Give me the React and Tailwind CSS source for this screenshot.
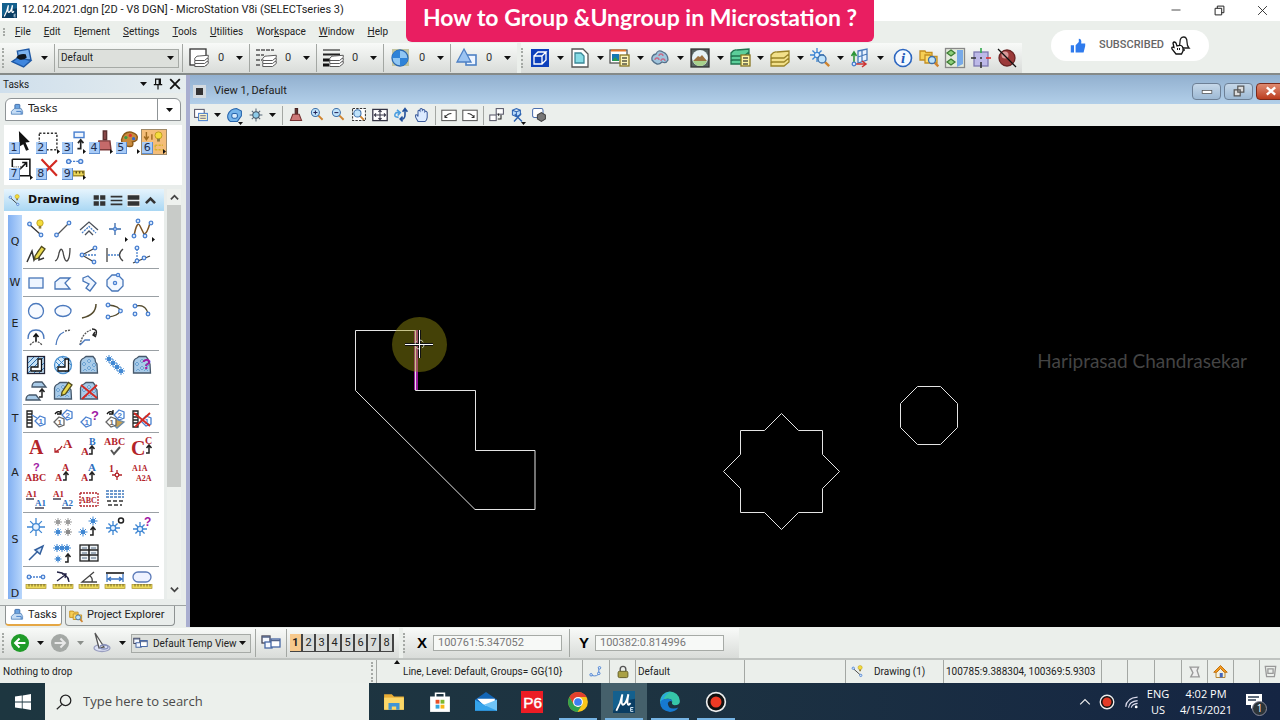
import React, { useState } from 'react';

const BLUE = '#4a80d0';
const RED = '#b3242a';

function Icon({ size = 20, children, className = '' }) {
  return (
    <svg width={size} height={size} viewBox="0 0 20 20" fill="none" strokeWidth="1.3" className={`shrink-0 overflow-visible ${className}`} aria-hidden="true">
      {children}
    </svg>
  );
}

function Caret({ dim = false, className = '' }) {
  return (
    <svg width="7" height="4" viewBox="0 0 7 4" className={`shrink-0 ${className}`} aria-hidden="true">
      <path d="M0 0H7L3.5 4Z" fill={dim ? '#8b8f8b' : '#111'} />
    </svg>
  );
}

// small node handle used by most of the drawing tools
const Dot = ({ x, y, r = 1.8 }) => <circle cx={x} cy={y} r={r} fill="#dcebff" stroke={BLUE} />;

const Burst = ({ x, y, r = 8, c = '#3f87d3' }) => (
  <g stroke={c} strokeWidth={r > 6 ? 1.3 : 1}>
    <path d={`M${x - r} ${y}H${x + r}M${x} ${y - r}V${y + r}M${x - r * 0.65} ${y - r * 0.65}L${x + r * 0.65} ${y + r * 0.65}M${x + r * 0.65} ${y - r * 0.65}L${x - r * 0.65} ${y + r * 0.65}`} />
    <circle cx={x} cy={y} r={r * 0.38} fill={r > 6 ? '#e6f2ff' : c} />
  </g>
);

const Txt = ({ x, y, s = 9, c = RED, sans, children }) => (
  <text x={x} y={y} fontSize={s} fill={c} stroke="none" fontWeight="700" fontFamily={sans ? '"Liberation Sans", sans-serif' : '"Liberation Serif", serif'}>{children}</text>
);

const UpArrow = ({ x, y }) => <path d={`M${x - 3} ${y + 9}H${x}V${y + 2}M${x - 2.5} ${y + 4}L${x} ${y + 1}L${x + 2.5} ${y + 4}`} stroke="#222" strokeWidth="1.5" />;

const Ruler = () => (
  <>
    <rect x="0" y="13.5" width="20" height="4" fill="#ecd95a" stroke="#a8922c" strokeWidth=".7" />
    <path d="M3 13v2.5M6 13v2.5M9 13v2.5M12 13v2.5M15 13v2.5M18 13v2.5" stroke="#5c4f17" strokeWidth=".8" />
  </>
);

const Bulb = ({ x, y }) => (
  <>
    <circle cx={x} cy={y} r="3.2" fill="#f4dc3c" stroke="#b99a1a" strokeWidth=".8" />
    <rect x={x - 1.3} y={y + 3} width="2.6" height="2.6" fill="#8c7a3c" />
  </>
);

const Pencil = () => <path d="M9 11L15.5 1.5L19 4L12.5 13L8.5 14.5Z" fill="#e9d84c" stroke="#4f4a1e" />;
const Cross = () => <path d="M2 4L18 17M18 4L3 18" stroke="#d32a22" strokeWidth="1.8" />;
const Cloud = () => (
  <>
    <path d="M1.5 18V7Q2 4 5 3L7 1.5H14L16 4Q16 7 18 9L18.5 18Z" fill="#a9cbe8" stroke="#46586b" />
    <path d="M3 9l2-2l2 2l-2 2ZM8 6l2-2l2 2l-2 2ZM8 13l2-2l2 2l-2 2ZM13 10l2-2l2 2l-2 2ZM4 16l2-2l2 2M12 16l2-2l2 2" stroke="#6ea4d4" strokeWidth="1" />
  </>
);
const Tag = ({ x, y, n, c = BLUE }) => (
  <>
    <path d={`M${x} ${y - 5}L${x + 5} ${y - 3}V${y + 3}L${x} ${y + 5}L${x - 5} ${y}Z`} fill="#fff" stroke={c} />
    <Txt x={x - 1.5} y={y + 3} s={8} c={c} sans>{n}</Txt>
  </>
);
const Film = () => <path d="M1 2H6V18H1ZM1 5H6M1 8H6M1 11H6M1 14H6" stroke="#222" fill="#fff" />;
const Sheets = ({ a, b, x = 0, y = 0, k = 1 }) => (
  <g transform={`translate(${x} ${y}) scale(${k})`} stroke={b} fill={a}>
    <path d="M1 15Q4 11 7 12L19 11V14L14 18L1 18Z" />
    <path d="M1 11Q4 7 7 8L19 7V10L14 14L1 14Z" />
    <path d="M1 7Q4 3 7 4L19 3V6L14 10L1 10Z" />
  </g>
);
const Lens = ({ x, y, r = 4 }) => (
  <>
    <path d={`M${x + r * 0.7} ${y + r * 0.7}L${x + r * 1.8} ${y + r * 1.8}`} stroke="#cf8430" strokeWidth="2.4" />
    <circle cx={x} cy={y} r={r} fill="#bfe3fb" stroke="#3d6fa8" />
  </>
);
const SmartLine = () => (
  <>
    <path d="M4 6L14 15" stroke="#333" />
    <Dot x={3.5} y={5} /><Dot x={15} y={16} /><Bulb x={14} y={4} />
  </>
);
const TaskBook = () => (
  <>
    <rect x="7" y="2" width="7" height="9" rx="1" fill="#6ba3e0" stroke="#3a69a6" />
    <path d="M2 12L6 8H16L18 12V16H2Z" fill="#c4dcf5" stroke="#5a88bd" />
    <path d="M9 12h7v4" stroke="#3d79c4" />
  </>
);
const Folders = () => (
  <>
    <path d="M1 3H6L7 4.5H13V12H1Z" fill="#f6cf55" stroke="#c48f21" />
    <path d="M6 7H11L12 8.5H18V15H6Z" fill="#fbdc72" stroke="#c48f21" />
    <Lens x={13} y={12} r={3.5} />
  </>
);
const Windows3 = () => (
  <>
    <rect x="1" y="3" width="8" height="7" fill="#f4f8ff" stroke="#445" />
    <rect x="4" y="9" width="7" height="6" fill="#f4f8ff" stroke="#4667a5" />
    <rect x="10" y="6" width="9" height="8" fill="#fff" stroke="#4667a5" />
    <path d="M1 4H9M10 7.5H19" stroke="#53658c" />
  </>
);
const Logo = () => (
  <>
    <rect width="20" height="20" fill="#0a3d63" />
    <path d="M0 0H20V7Q8 8 0 18Z" fill="#14608e" />
    <path d="M3 18Q7 11 8.5 3Q7 12 9 12.5Q12 12 14 3Q12 13 14.5 12.500L16 11" stroke="#fff" strokeWidth="1.700" />
    <path d="M18.500 15H16V18.500H18.500M16 16.700H18" stroke="#cfe4f2" strokeWidth=".9" />
  </>
);

const tools = {
  smartline: <SmartLine />,
  line: <><path d="M4 16L16 4" stroke="#555" /><Dot x={3.5} y={16} /><Dot x={16} y={4} /></>,
  multiline: <><path d="M1 11L10 3L19 11M6 16L10 12L14 16" stroke="#4a4f58" /><path d="M3 14L10 7.500L17 14" stroke="#4b82cb" strokeDasharray="2 1" /></>,
  point: <><path d="M4 10H16M10 4V16" stroke="#3768a8" /><Dot x={10} y={10} r={1.5} /></>,
  curve: <><path d="M2 17Q5 1 8 7T12 15Q15 15 18 4" stroke="#7c5425" strokeWidth="1.500" /><Dot x={2} y={17} /><Dot x={6} y={2} /><Dot x={13} y={17} /><Dot x={19} y={4} /></>,
  sketch: <><path d="M1 17L6 6L8 15L13 5V15L18 13" stroke="#333" strokeWidth="1.5" /><Pencil /></>,
  stream: <path d="M2 16Q5 15 6 8Q8 1 10 7Q12 19 15 15Q17 12 17 3" stroke="#444" />,
  bisect: <><path d="M3 10L16 3M3 10L15 17" stroke="#444" /><path d="M6 10H18" stroke="#4b82cb" strokeDasharray="2 1" /><Dot x={3} y={10} /><Dot x={16} y={3} /><Dot x={15} y={17} /></>,
  minDist: <><path d="M2 3V17M18 4Q11 10 18 16" stroke="#444" /><path d="M3 10H14" stroke="#4b82cb" strokeDasharray="2 1" /></>,
  angle: <><path d="M1 18L18 11" stroke="#444" /><path d="M5 4V14" stroke="#4b82cb" strokeDasharray="2 1" /><Dot x={5} y={3} /><Dot x={5} y={16} /><Dot x={12} y={13} /></>,

  block: <rect x="3" y="5" width="14" height="10" fill="#eef5ff" stroke="#4876b8" />,
  shape: <path d="M2 16V9L7 5H17L12 10L17 16Z" fill="#eef5ff" stroke="#4876b8" />,
  ortho: <path d="M4 5L9 3L17 10L11 18L7 15L10 11L4 8Z" fill="#eef5ff" stroke="#4876b8" />,
  polygon: <><path d="M7 2H13L18 7V13L13 18H7L2 13V7Z" fill="#f3f8ff" stroke="#4876b8" /><Dot x={10} y={10} r={1.6} /><Dot x={13} y={2} r={1.6} /></>,

  circle: <circle cx="10" cy="10" r="7.5" fill="#f7faff" stroke="#4b79bd" />,
  ellipse: <ellipse cx="10" cy="10" rx="8" ry="5.5" fill="#f7faff" stroke="#4b79bd" />,
  arc: <path d="M17 3Q17 14 3 17" stroke="#544b2e" strokeWidth="1.5" />,
  halfEllipse: <><path d="M3 4Q15 5 15 10Q13 15 3 16" stroke="#544b2e" /><Dot x={3} y={4} /><Dot x={15.5} y={10} /><Dot x={3} y={16} /></>,
  quarter: <><path d="M4 5Q14 3 16 13" stroke="#544b2e" /><Dot x={3} y={5} /><Dot x={16} y={13} /><Dot x={3} y={13} /></>,
  arcRadius: <><path d="M2 12Q2 3 10 3Q18 3 18 12" stroke="#4b79bd" /><path d="M4 18Q10 11 16 18" stroke="#555" strokeDasharray="2 1" /><path d="M10 14V7M7.500 10L10 7L12.500 10" stroke="#111" strokeWidth="1.600" /></>,
  arcAngle: <><path d="M3 18Q4 8 11 5" stroke="#4b79bd" /><path d="M12 4L18 3" stroke="#555" strokeDasharray="2 1" /></>,
  arcAxis: <><path d="M1 18Q3 6 12 3" stroke="#555" strokeDasharray="2 1" /><path d="M1 18L6 13H11" stroke="#4b79bd" /><path d="M13 2Q19 2 17 8H14M16 5L14 8L17 10" stroke="#222" strokeWidth="1.4" /></>,

  hatch: <><rect x="1.5" y="1.5" width="17" height="17" fill="#c4e0f5" stroke="#223" /><path d="M2 8L8 2M2 13L13 2M2 18L18 2M8 18L18 8M13 18L18 13" stroke="#2a6aa8" strokeWidth="1" /><path d="M12 4H15.500V16H5V12H12Z" fill="#fff" stroke="#111" /></>,
  crosshatch: <><circle cx="10" cy="10" r="8.5" fill="#d7eafa" stroke="#4a90cf" /><path d="M3 7L13 17M5 4L16 15M9 2L18 10M3 13L13 3M6 16L17 5" stroke="#3a87cc" strokeWidth="1" /><path d="M12 4H15.500V16H5V12H12Z" fill="#fff" stroke="#111" /></>,
  pattern: <Cloud />,
  linear: <><Burst x={4} y={4} r={4} /><Burst x={8} y={8} r={4} /><Burst x={12} y={12} r={4} /><Burst x={16} y={16} r={4} /></>,
  showPattern: <><Cloud /><Txt x={10} y={14} s={15} c="#a11aa5" sans>?</Txt></>,
  matchPattern: <><path d="M6 6Q6 2 9 1H16L20 6ZM0 19Q0 15 3 14H10L14 19Z" fill="#a9cbe8" stroke="#46586b" /><UpArrow x={16} y={7} /></>,
  changePattern: <><Cloud /><Pencil /></>,
  deletePattern: <><Cloud /><Cross /></>,

  attachTags: <><Film /><path d="M6 6L11 9" stroke={BLUE} /><Tag x={14} y={12} n="1" /></>,
  editTags: <><path d="M2 5Q5 1 8 4M8 1V5H4" stroke="#111" /><Tag x={6} y={13} n="1" c="#666" /><Tag x={14} y={6} n="2" /></>,
  reviewTags: <><Tag x={7} y={13} n="1" /><Txt x={12} y={11} s={13} c="#a11aa5" sans>?</Txt></>,
  changeTags: <><path d="M10 10L19 13L12 19L8 15Z" fill="#c8a050" stroke="#6789aa" /><path d="M2 5Q5 1 8 4M8 1V5H4" stroke="#111" /><Tag x={6} y={13} n="1" c="#666" /><Tag x={14} y={6} n="2" /></>,
  deleteTags: <><Film /><Tag x={14} y={12} n="1" /><Cross /></>,

  text: <Txt x={3} y={17} s={20}>A</Txt>,
  note: <><Txt x={10} y={11} s={13}>A</Txt><path d="M9 9L7 12L2 15M2 11V15H6" stroke={RED} /></>,
  editText: <><Txt x={2} y={18} s={11}>A</Txt><Txt x={10} y={8} s={10} c="#2d6fc0">B</Txt><UpArrow x={13} y={8} /></>,
  spell: <><Txt x={-1} y={8} s={10}>ABC</Txt><path d="M6 13L9 17L15 10" stroke="#555" strokeWidth="2" /></>,
  changeText: <><Txt x={-1} y={18} s={20}>C</Txt><Txt x={13} y={7} s={10}>C</Txt><UpArrow x={17} y={7} /></>,
  showText: <><Txt x={7} y={8} s={11} c="#a11aa5" sans>?</Txt><Txt x={-1} y={18} s={10}>ABC</Txt></>,
  matchText: <><Txt x={2} y={18} s={10}>A</Txt><Txt x={9} y={8} s={10}>A</Txt><UpArrow x={13} y={8} /></>,
  changeAttr: <><Txt x={2} y={18} s={10}>A</Txt><Txt x={9} y={8} s={11} c="#2d6fc0">A</Txt><UpArrow x={13} y={8} /></>,
  textNode: <><Txt x={4} y={9} s={10}>1</Txt><path d="M12 7V17M7 12H17" stroke={RED} /><circle cx="12" cy="12" r="1.8" fill="#fff" stroke={RED} /></>,
  copyText: <><Txt x={0} y={8} s={8}>A1A</Txt><Txt x={4} y={18} s={8}>A2A</Txt></>,
  copyInc: <><Txt x={0} y={8} s={9}>A1</Txt><path d="M0 10H8M9 19H18" stroke="#445" /><Txt x={9} y={17} s={9} c="#2d6fc0">A1</Txt></>,
  copyEnter: <><Txt x={0} y={8} s={9}>A1</Txt><path d="M0 10H8M9 19H18" stroke="#445" /><Txt x={9} y={17} s={9} c="#2d6fc0">A2</Txt></>,
  fillField: <><path d="M1 4H19M1 17H19M1 4V17M19 4V17" stroke={RED} strokeDasharray="2 1" /><Txt x={1} y={14} s={8}>ABC</Txt></>,
  fields: <><path d="M1 2H19M1 5H19M1 8H19" stroke="#3f78bd" strokeDasharray="3 1" /><path d="M2 12H19M3 16H17" stroke="#333" strokeDasharray="4 2" /></>,

  placeCell: <Burst x={10} y={10} r={9} />,
  matrix: <><Burst x={5} y={5} r={4} c="#999" /><Burst x={15} y={5} r={4} c="#999" /><Burst x={5} y={15} r={4} /><Burst x={15} y={15} r={4} c="#888" /></>,
  selectCell: <><Burst x={14} y={4} r={4.5} /><Burst x={4} y={15} r={4.5} /><UpArrow x={14} y={9} /></>,
  defineOrigin: <><Burst x={8} y={11} r={7} /><circle cx="16" cy="3.500" r="2.500" stroke="#222" strokeWidth="1.500" /></>,
  identify: <><Burst x={8} y={12} r={7} /><Txt x={12} y={9} s={12} c="#a11aa5" sans>?</Txt></>,
  terminator: <path d="M3 17L12 8M9 7L17 3L14 11Z" stroke="#335f9d" strokeWidth="1.5" fill="#d3e8ff" />,
  replaceCell: <><Burst x={4} y={5} r={4} /><Burst x={9} y={5} r={4} /><Burst x={14} y={5} r={4} /><Burst x={5} y={16} r={3.5} /><UpArrow x={15} y={10} /></>,
  cellTable: <><rect x="1" y="2" width="18" height="16" fill="#eef2f5" stroke="#222" /><path d="M1 7H19M1 12H19M10 2V18" stroke="#222" strokeWidth="1.6" /><path d="M3 5h5M12 5h5M3 10h5M12 10h5M3 15h5M12 15h5" stroke="#89a" /></>,

  dimElement: <><path d="M4 6H15" stroke={BLUE} strokeDasharray="2 1" /><Dot x={3} y={6} /><Dot x={17} y={6} /><Ruler /></>,
  dimRadius: <><path d="M4 1Q15 2 16 11M4 10L12 4M9 3L13 3L12 7" stroke="#224" /><Ruler /></>,
  dimAngle: <><path d="M15 1L3 11H18M11 5Q14 7 13 11" stroke="#444" /><Ruler /></>,
  dimLinear: <><path d="M1 2H19" stroke="#333" strokeWidth="1.8" /><path d="M2 3V11M18 3V11M3 8H17M6 6L3 8L6 10M14 6L17 8L14 10" stroke="#3b73c0" /><Ruler /></>,
  dimSize: <><rect x="1" y="1" width="18" height="10" rx="5" fill="#eef2ff" stroke="#5a79b8" /><Ruler /></>,
};

const palette = [
  { key: 'Q', rows: ['smartline line multiline point curve', 'sketch stream bisect minDist angle'] },
  { key: 'W', rows: ['block shape ortho polygon'] },
  { key: 'E', rows: ['circle ellipse arc halfEllipse quarter', 'arcRadius arcAngle arcAxis'] },
  { key: 'R', rows: ['hatch crosshatch pattern linear showPattern', 'matchPattern changePattern deletePattern'] },
  { key: 'T', rows: ['attachTags editTags reviewTags changeTags deleteTags'] },
  { key: 'A', rows: ['text note editText spell changeText', 'showText matchText changeAttr textNode copyText', 'copyInc copyEnter fillField fields'] },
  { key: 'S', rows: ['placeCell matrix selectCell defineOrigin identify', 'terminator replaceCell cellTable'] },
  { key: 'D', rows: ['dimElement dimRadius dimAngle dimLinear dimSize', ''] },
];

const mainTasks = [
  { name: 'Element Selection', art: <path d="M9 0L19 10L15 10.5L18 17L15.5 18L13 12L9.5 14Z" fill="#111" /> },
  { name: 'Fence', more: true, art: <path d="M3 2H19V17H3Z" stroke="#333" strokeDasharray="2 1.5" /> },
  { name: 'Manipulate', more: true, art: <><rect x="11" y="1" width="9" height="5" fill="#eef5ff" stroke={BLUE} /><UpArrow x={17} y={7} /></> },
  { name: 'View Control', more: true, art: <><path d="M13 0H16V8H13Z" fill="#8a4a4a" stroke="#5b3030" /><path d="M9 9H19L20 17H8Z" fill="#c56a6a" stroke="#7c3a3a" /></> },
  { name: 'Change Attributes', more: true, art: <><path d="M5 8Q7 0 14 1Q21 3 19 8Q17 10 15 10Q17 15 11 14Q5 13 5 8Z" fill="#c98a3c" stroke="#8a5716" /><circle cx="9" cy="6" r="1.5" fill="#3b9b45" /><circle cx="13" cy="4" r="1.5" fill="#d33" /><circle cx="16" cy="7" r="1.5" fill="#36c" /></> },
  { name: 'Groups', more: true, active: true, art: <><path d="M4 1V7M2 5L4 8L6 5M9 3V8" stroke="#a06a20" /><Bulb x={15} y={4} /><path d="M12 13h7M12 17h7M12 13v4" stroke="#d8b32c" strokeDasharray="2 1" /></> },
  { name: 'Modify', more: true, art: <><path d="M3 2H19V17H10M3 2V9" stroke="#111" strokeWidth="1.4" /><path d="M10 11L16 5M12 5H16V9" stroke="#111" strokeWidth="1.4" /><path d="M4 9H11V12" stroke="#666" strokeDasharray="1 1" /></> },
  { name: 'Delete', art: <path d="M5 2L19 17M19 3L9 13" stroke="#d32a22" strokeWidth="2" /> },
  { name: 'Measure', more: true, art: <><path d="M7 4H15" stroke={BLUE} strokeDasharray="2 1" /><Dot x={6} y={4} /><Dot x={17} y={4} /><path d="M10 13h10v4H10z" fill="#ecd95a" stroke="#a8922c" /><path d="M13 13v2M16 13v2M19 13v2" stroke="#5c4f17" /></> },
];

const attributes = [
  { name: 'Color', art: <><rect x="1" y="1" width="16" height="16" fill="#fff" stroke="#333" /><Sheets a="#fff" b="#555" x={5} y={5} k={0.75} /></> },
  { name: 'Line style', art: <><path d="M0 2H18M0 7H8M0 12H6M0 17H5" stroke="#555" strokeDasharray="4 1" strokeWidth="1.5" /><Sheets a="#fff" b="#555" x={6} y={5} k={0.75} /></> },
  { name: 'Line weight', art: <><path d="M0 2H17" stroke="#444" /><path d="M0 6.5H17" stroke="#222" strokeWidth="2" /><path d="M0 12H7M0 17H6" stroke="#111" strokeWidth="3" /><Sheets a="#fff" b="#555" x={6} y={5} k={0.75} /></> },
  { name: 'Transparency', art: <><rect x="2" y="1" width="17" height="17" fill="#c3c5a0" /><circle cx="10" cy="10" r="8" fill="#8fc6f3" stroke="#2c68ae" /><path d="M10 2V10H2A8 8 0 0 1 10 2M10 10H18A8 8 0 0 1 10 18Z" fill="#2f83d8" /></> },
  { name: 'Priority', art: <><rect x="9" y="7" width="10" height="10" fill="#eef5ff" stroke="#4d80c4" strokeWidth="1.6" /><path d="M7 1L14 14H0Z" fill="#9cc4f2" stroke="#4d80c4" /></> },
];

const dropTools = [
  { name: 'Models', art: <><rect x="1" y="1" width="18" height="18" fill="#0d40bb" /><path d="M4 8H12V16H4ZM4 8L8 4H16L12 8M16 4V12L12 16" stroke="#fff" /></> },
  { name: 'References', art: <><path d="M2 1H13L18 6V19H2Z" fill="#fff" stroke="#555" /><path d="M5 5H11L14 8V15H5Z" fill="#86dce6" stroke="#3b8796" /></> },
  { name: 'Raster Manager', art: <><rect x="0" y="2" width="17" height="13" fill="#fff" stroke="#555" /><path d="M1 2.5H16" stroke="#e2762c" strokeWidth="2" /><rect x="2" y="6" width="7" height="7" fill="#1878b4" /><path d="M2 13L5 9L9 13" fill="#2b9b4e" /><rect x="10" y="7" width="9" height="11" fill="#fdf4b8" stroke="#887523" /><path d="M12 10h5M12 13h5M12 16h5" stroke="#554" /></> },
  { name: 'Point Clouds', art: <><path d="M2 12Q1 7 6 6Q8 1 13 4Q18 6 18 12Q16 16 12 14Q7 19 2 12Z" fill="#9fc4dc" stroke="#55718b" /><path d="M5 12a2 2 0 0 1 4 0M9 8a2 2 0 0 1 4 0M11 13a2 2 0 0 1 4 0" stroke="#c76a86" /></> },
  { name: 'Saved Views', art: <><rect x="1" y="1" width="18" height="18" fill="#566461" stroke="#333" /><circle cx="10" cy="10" r="8" fill="#e6f3f5" /><path d="M3 13L8 8L10 9L12 7L17 13Z" fill="#9b7340" /><path d="M3 13H17Q15 18 10 18T3 13" fill="#a8d18c" /></> },
  { name: 'Level Manager', art: <><Sheets a="#5ccf9a" b="#207450" y={-2} /><rect x="11" y="7" width="9" height="11" fill="#fdf4a0" stroke="#887523" /><path d="M13 10h5M13 13h5M13 16h5" stroke="#554" /></> },
  { name: 'Level Display', art: <Sheets a="#f2e08a" b="#9a8428" /> },
  { name: 'Element Information', art: <><Burst x={7} y={7} r={7} /><Lens x={12} y={11} /></> },
  { name: 'Auxiliary Coordinates', art: <><path d="M8 3L17 1V12L8 15ZM8 9L17 6M12 2V14" fill="#e8f2ff" stroke="#4779ba" /><path d="M4 16V5M1.5 8L4 4L6.5 8" stroke="#2d9638" strokeWidth="1.6" /><path d="M4 16H15M12 13L16 16L12 19" stroke="#c33" strokeWidth="1.5" /><Dot x={4} y={16} /></> },
];

const plainTools = [
  { name: 'Information', art: <><circle cx="10" cy="10" r="8.5" fill="#f4f9ff" stroke="#2c66c0" strokeWidth="1.6" /><text x="8" y="15" fontSize="15" fontStyle="italic" fontWeight="700" fill="#2058b8" fontFamily='"Liberation Serif", serif'>i</text></> },
  { name: 'Find', art: <Folders /> },
  { name: 'Toggle AccuDraw', art: <><rect x="0.5" y="0.5" width="19" height="19" fill="#e4ebdd" stroke="#888" /><path d="M12 2H18V16L12 19Z" fill="#78aae8" /><path d="M6 2L10 5L6 8L2 5ZM6 11L10 14L6 17L2 14Z" fill="#8ed07a" stroke="#3d7b34" /></> },
  { name: 'AccuDraw', art: <><rect x="3" y="4" width="14" height="14" fill="#bdb9e8" stroke="#7d78b0" /><path d="M10 0V5" stroke="#2fa84b" strokeWidth="1.6" /><path d="M15 10H20" stroke="#d33" strokeWidth="1.6" /><path d="M0 10H5M10 14V20M9 10h2" stroke="#333" strokeWidth="1.6" /></> },
  { name: 'Popset', art: <><circle cx="10" cy="10" r="8" fill="#9c3a3a" stroke="#6a2424" /><circle cx="8" cy="7" r="3.500" fill="#d89a9a" /><path d="M1 1L19 19" stroke="#111" /></> },
];

const viewTools = [
  { name: 'View Attributes', drop: true, art: <><rect x="2" y="3" width="12" height="10" fill="#fff" stroke="#556" /><rect x="7" y="8" width="11" height="9" fill="#fdf7c8" stroke="#4a80d0" /><path d="M9 11h7M9 14h7" stroke="#668" /></> },
  { name: 'Display Style', more: true, art: <><path d="M1 10Q4 2 12 2L18 5V11L13 18H4Q0 15 1 10Z" fill="#74b4ea" stroke="#2765ac" /><rect x="6" y="8" width="7" height="6" rx="2" fill="#d6ebfb" stroke="#2765ac" /></> },
  { name: 'Adjust Brightness', drop: true, art: <><Burst x={10} y={10} r={8} c="#567" /><circle cx="10" cy="10" r="4" fill="#8ecbe8" stroke="#456" /></> },
  { name: 'Update View', sep: true, art: <><path d="M9 2H12V9H9Z" fill="#633" stroke="#422" /><path d="M6 9H14L17 17H3Z" fill="#c77" stroke="#733" /></> },
  { name: 'Zoom In', art: <><Lens x={8} y={7} r={5} /><path d="M5.5 7H10.5M8 4.5V9.5" stroke="#225" /></> },
  { name: 'Zoom Out', art: <><Lens x={8} y={7} r={5} /><path d="M5.5 7H10.5" stroke="#225" /></> },
  { name: 'Window Area', art: <><rect x="2" y="2" width="16" height="15" stroke="#333" strokeDasharray="3 1.5" fill="#fff" /><Lens x={8} y={8} r={4.5} /></> },
  { name: 'Fit View', art: <><rect x="1" y="3" width="18" height="14" fill="#fff" stroke="#334" strokeWidth="1.6" /><path d="M3 10H17M10 4V16M5 8L3 10L5 12M15 8L17 10L15 12M8 6L10 4L12 6M8 14L10 16L12 14" stroke="#334" /></> },
  { name: 'Rotate View', art: <><path d="M7 13Q-1 12 4 7H9M5 3.500L9 7L6 10.500" stroke="#4a9ee0" strokeWidth="2" /><path d="M15 3V10Q15 16 9 15M12 6L15 2L18 6M12 12L9 15L12 18" stroke="#23529c" strokeWidth="2" /></> },
  { name: 'Pan View', art: <path d="M5 18Q1 12 2 10Q4 9 5 12V5Q6 3 7.5 5V3Q9 1 10.5 3V4Q12 2 13.5 4V6Q15 4 16.5 7V13Q16 17 14 18Z" fill="#dcebff" stroke="#3c5c9c" /> },
  { name: 'View Previous', sep: true, art: <><rect x="1" y="4" width="18" height="13" fill="#fff" stroke="#555" /><path d="M5 10V13H8M5 13Q8 8 13 8" stroke="#333" /></> },
  { name: 'View Next', art: <><rect x="1" y="4" width="18" height="13" fill="#fff" stroke="#555" /><path d="M15 10V13H12M15 13Q12 8 7 8" stroke="#333" /></> },
  { name: 'Copy View', sep: true, art: <><rect x="9" y="2" width="9" height="7" fill="#fff" stroke="#556" /><rect x="1" y="10" width="8" height="7" fill="#fff" stroke="#556" /><path d="M11 15H15V10M12 8v3" stroke="#222" /></> },
  { name: 'View Perspective', more: true, art: <><path d="M3 4L8 2L13 4V10L8 12L3 10ZM3 4L8 6L13 4M8 6V12" fill="#b8d9fa" stroke="#2e64b2" /><path d="M5 18L14 8M6 9L15 18" stroke="#2e64b2" strokeWidth="1.8" /></> },
  { name: 'Clip Volume', art: <><rect x="2" y="2" width="13" height="11" rx="2" fill="#fff" stroke="#4c6fae" /><path d="M8 10L13 7L18 10V15L13 18L8 15Z" fill="#777" stroke="#444" /></> },
];

const menus = [['', 'F', 'ile'], ['', 'E', 'dit'], ['E', 'l', 'ement'], ['', 'S', 'ettings'], ['', 'T', 'ools'], ['', 'U', 'tilities'], ['Wor', 'k', 'space'], ['', 'W', 'indow'], ['', 'H', 'elp']];

const Grip = () => <span className="h-5 w-0 shrink-0 border-l-2 border-dotted border-[#a5a9a5]" />;
const Sep = () => <span className="h-7 w-px shrink-0 bg-[#a3a7a3]" />;

function TitleBar() {
  return (
    <header className="flex h-[21px] items-center justify-between bg-white pl-[2px]">
      <div className="flex items-center gap-[5px]">
        <Icon size={15}><Logo /></Icon>
        <h1 className="text-[11px] text-[#1c1c1c]">12.04.2021.dgn [2D - V8 DGN] - MicroStation V8i (SELECTseries 3)</h1>
      </div>
      <div className="flex gap-[7px]">
        <button type="button" aria-label="Minimize" className="flex w-9 justify-center"><Icon size={10}><path d="M1 10H19" stroke="#222" strokeWidth="1.6" /></Icon></button>
        <button type="button" aria-label="Restore" className="flex w-9 justify-center"><Icon size={11}><path d="M2 6H14V18H2ZM6 6V2H18V14H14" stroke="#222" strokeWidth="1.8" /></Icon></button>
        <button type="button" aria-label="Close" className="flex w-9 justify-center"><Icon size={11}><path d="M2 2L18 18M18 2L2 18" stroke="#222" strokeWidth="1.6" /></Icon></button>
      </div>
    </header>
  );
}

function MenuBar() {
  return (
    <nav className="flex h-[22px] items-center pl-[3px]">
      <span className="h-2 w-0 border-l-2 border-dotted border-[#a5a9a5]" />
      <div className="flex gap-[13px] pl-[10px]">
        {menus.map(([a, u, b]) => (
          <button key={a + u + b} type="button" className="leading-4 text-[#222]">{a}<span className="underline">{u}</span>{b}</button>
        ))}
      </div>
    </nav>
  );
}

function MainToolbar() {
  return (
    <div className="flex h-[32px] items-stretch gap-1 border-b-2 border-[#858a88]">
      <div className="flex items-center bg-linear-to-b from-[#f8faf8] to-[#d9dcd9] pl-[2px]">
        <Grip />
        <button type="button" aria-label="Active model" className="flex w-[50px] items-center justify-between pr-[6px] pl-[7px]">
          <Icon size={21}><path d="M6 3L17 1L19 11L8 14Z" fill="#7db4ee" stroke="#1e58a5" /><path d="M1 13L7 9L19 12L12 18Z" fill="#3f86de" stroke="#1e58a5" /><path d="M5 9Q8 5 14 6L15 9Q12 12 8 11Z" fill="#101820" /></Icon>
          <Caret />
        </button>
        <Sep />
        <span className="relative mx-[3px] flex items-center">
          <select aria-label="Active level" className="h-[19px] w-[121px] appearance-none border border-[#a6aaa6] bg-[#dde0dc] pl-[2px] leading-4 text-[#222]"><option>Default</option></select>
          <Caret className="pointer-events-none absolute right-[5px]" />
        </span>
        {attributes.map(a => (
          <label key={a.name} className="relative flex h-7 w-[67px] items-center border-l border-[#a3a7a3] pl-[6px]">
            <Icon>{a.art}</Icon>
            <select aria-label={a.name} className="ml-[8px] w-7 appearance-none bg-transparent pl-px text-[11px] text-[#333]"><option>0</option></select>
            <Caret className="pointer-events-none absolute right-[6px]" />
          </label>
        ))}
      </div>
      <div className="flex items-center bg-linear-to-b from-[#f8faf8] to-[#d9dcd9] pr-[5px]">
        <Grip />
        <div className="flex pl-[7px]">
          {dropTools.map(t => (
            <button key={t.name} type="button" aria-label={t.name} className="flex w-[40px] items-center gap-[7px]"><Icon>{t.art}</Icon><Caret /></button>
          ))}
        </div>
        <div className="flex gap-[6px] pl-[3px]">
          {plainTools.map(t => <button key={t.name} type="button" aria-label={t.name}><Icon>{t.art}</Icon></button>)}
        </div>
      </div>
    </div>
  );
}

function TasksPanel() {
  const [active, setActive] = useState('Groups');
  return (
    <aside className="flex w-[190px] shrink-0 flex-col overflow-hidden border-r-4 border-[#a9aed0] bg-[#e9edeb]">
      <div className="flex h-[18px] shrink-0 items-center bg-linear-to-r from-[#cfdfec] to-[#e6edef] pr-[5px] pl-[3px]">
        <h2 className="grow text-[#222]">Tasks</h2>
        <div className="flex items-center gap-[5px]">
          <button type="button" aria-label="Panel menu"><Caret /></button>
          <button type="button" aria-label="Pin"><Icon size={12}><path d="M6 2H14V11H6ZM3 11H17M10 11V19M12 2V11" stroke="#111" strokeWidth="2" /></Icon></button>
          <button type="button" aria-label="Close panel"><Icon size={12}><path d="M2 2L18 18M18 2L2 18" stroke="#111" strokeWidth="3" /></Icon></button>
        </div>
      </div>

      <div className="relative mx-[5px] mt-[5px] flex h-[23px] shrink-0 items-center rounded-t-md border border-[#8f9496] bg-white">
        <Icon size={14} className="absolute left-[4px]"><TaskBook /></Icon>
        <select aria-label="Task list" className="w-full appearance-none bg-transparent pl-[22px] font-['DejaVu_Sans',sans-serif] text-[11px] text-[#222]"><option>Tasks</option></select>
        <span className="pointer-events-none absolute right-0 flex h-full w-[23px] items-center justify-center border-l border-[#8f9496]"><Caret /></span>
      </div>

      <div className="mx-[4px] mt-[4px] grid h-[60px] shrink-0 grid-cols-6 content-center bg-white pr-[14px] pl-[4px]">
        {mainTasks.map((t, i) => (
          <button key={t.name} type="button" aria-label={t.name} onClick={() => setActive(t.name)}
            className={`relative h-[26px] w-[26px] border ${active === t.name ? 'border-[#a08a68] bg-[#f4bd79]' : 'border-transparent'}`}>
            <Icon size={22}>{t.art}</Icon>
            <span className="absolute bottom-0 left-0 h-[12px] w-[11px] border-r border-b border-[#5f8fd0] bg-[#a8cbf7] text-center font-['DejaVu_Sans',sans-serif] text-[11px] leading-[12px] text-[#1d2c4c]">{i + 1}</span>
            {t.more && <svg width="3" height="5" className="absolute right-0 bottom-0"><path d="M0 0L3 2.5L0 5Z" fill="#111" /></svg>}
          </button>
        ))}
      </div>

      <div className="mx-[4px] mt-[4px] flex h-[410px] min-h-0 gap-[3px]">
        <div className="flex w-[160px] flex-col overflow-hidden bg-white">
          <div className="flex h-[22px] shrink-0 items-center bg-linear-to-b from-[#e6f4fd] to-[#a9d7f3] pr-[7px] pl-[4px]">
            <Icon size={13}><SmartLine /></Icon>
            <h3 className="ml-[7px] grow font-['DejaVu_Sans',sans-serif] text-[11px] font-bold text-[#111]">Drawing</h3>
            <div className="flex items-center gap-[4px]">
              <button type="button" aria-label="Icon view"><Icon size={13}><path d="M1 2H9V9H1ZM11 2H19V9H11ZM1 11H9V18H1ZM11 11H19V18H11Z" fill="#333" /></Icon></button>
              <button type="button" aria-label="List view"><Icon size={13}><path d="M1 4H19M1 10H19M1 16H19" stroke="#333" strokeWidth="2.5" /></Icon></button>
              <button type="button" aria-label="Panel view" className="bg-[#e8eef2]"><Icon size={13}><path d="M1 2H19V9H1ZM1 11H19V18H1Z" fill="#333" /></Icon></button>
              <button type="button" aria-label="Collapse"><Icon size={13}><path d="M3 14L10 7L17 14" stroke="#333" strokeWidth="4" /></Icon></button>
            </div>
          </div>
          <div className="flex flex-col pt-[4px] pr-[5px] pl-[4px]">
            {palette.map(group => (
              <section key={group.key} className="flex">
                <h4 className="flex w-[14px] items-center justify-center bg-linear-to-r from-[#82b0f2] to-[#b8d6fb] font-['DejaVu_Sans',sans-serif] text-[11px] text-[#222]">{group.key}</h4>
                <div className="ml-px grow border-b border-[#9aa0a4] pt-px pr-[4px]">
                  {group.rows.map((row, r) => (
                    <div key={r} className="grid h-[26px] grid-cols-5 items-center justify-items-center">
                      {row.split(' ').filter(Boolean).map(name => (
                        <button key={name} type="button" aria-label={name} className="relative">
                          <Icon>{tools[name]}</Icon>
                          {(name === 'point' || name === 'curve') && <svg width="3" height="5" className="absolute -right-[3px] -bottom-[3px]"><path d="M0 0L3 2.5L0 5Z" fill="#111" /></svg>}
                        </button>
                      ))}
                    </div>
                  ))}
                </div>
              </section>
            ))}
          </div>
        </div>
        <div className="flex w-[14px] flex-col items-center bg-[#eef1ee]">
          <button type="button" aria-label="Scroll up" className="flex h-[16px] items-center"><Icon size={9}><path d="M2 14L10 6L18 14" stroke="#444" strokeWidth="4" /></Icon></button>
          <span className="h-[282px] w-full bg-[#c8cbc8]" />
          <span className="grow" />
          <button type="button" aria-label="Scroll down" className="flex h-[20px] items-center"><Icon size={9}><path d="M2 6L10 14L18 6" stroke="#444" strokeWidth="4" /></Icon></button>
        </div>
      </div>

      <div className="mt-[6px] flex grow items-start gap-[3px] border-t border-[#9ea3a3] pl-[5px] text-[11px] text-[#222]">
        <button type="button" className="flex h-[20px] w-[57px] items-center gap-[4px] rounded-b border border-t-0 border-b-2 border-[#8d9292] border-b-[#e5a744] bg-white pl-[4px]"><Icon size={14}><TaskBook /></Icon>Tasks</button>
        <button type="button" className="flex h-[20px] w-[110px] items-center gap-[4px] rounded-b border border-t-0 border-[#8d9292] pl-[3px] whitespace-nowrap"><Icon size={14}><Folders /></Icon>Project Explorer</button>
      </div>
    </aside>
  );
}

function Canvas() {
  return (
    <div className="relative min-h-0 grow overflow-hidden bg-black">
      <svg className="absolute inset-0 h-full w-full" fill="none" aria-label="Drawing" role="img">
        <g transform="translate(-190 -126)">
          <path d="M416 330V390" stroke="#9a1a9e" strokeWidth="4" />
          <g stroke="#e4e4e4">
            <path d="M355.5 330.5H415.5V390.5H475.5V450.5H535V509.5H475L355.5 390.5Z" />
            <path d="M740.5 430.5H764.5L781.5 413.5L798.5 430.5H822.5V454.5L839.5 471.5L822.5 488.5V512.5H798.5L781.5 529.5L764.5 512.5H740.5V488.5L723.5 471.5L740.5 454.5Z" />
            <path d="M917.5 386.5H940.5L957.5 403.5V427.5L940.5 444.5H917.5L900.5 427.5V403.5Z" />
          </g>
          <circle cx="419.5" cy="344.5" r="27.5" fill="#a39a10" fillOpacity=".42" />
          <path d="M419.5 330V358M405 344.5H433" stroke="#111" strokeWidth="3" />
          <circle cx="419.5" cy="344.5" r="4.5" stroke="#c9c9b8" strokeDasharray="4 3" />
          <path d="M419.5 330V358M405 344.5H433" stroke="#fff" />
        </g>
      </svg>
      <p className="absolute top-[221px] right-[33px] font-['Lato',sans-serif] text-[19px] leading-7 text-[#444]">Hariprasad Chandrasekar</p>
    </div>
  );
}

function ViewWindow() {
  return (
    <main className="flex min-w-0 grow flex-col overflow-hidden">
      <div className="flex h-[29px] shrink-0 items-center bg-linear-to-b from-[#92b0cf] to-[#b2cfe9] pt-[3px] pl-[3px]">
        <span className="flex h-[13px] w-[13px] items-center justify-center bg-[#d4dbe0]"><span className="h-[7px] w-[7px] bg-[#333]" /></span>
        <h2 className="ml-2 grow text-[11px] text-[#222]">View 1, Default</h2>
        <div className="-mr-[5px] flex gap-[3px]">
          <button type="button" aria-label="Minimize view" className="flex h-[17px] w-[29px] items-center justify-center rounded-sm border border-[#6d8096] bg-linear-to-b from-[#c6d8e9] to-[#9db9d4]"><Icon size={12}><rect x="2" y="9" width="16" height="5" fill="#fff" stroke="#555" /></Icon></button>
          <button type="button" aria-label="Restore view" className="flex h-[17px] w-[29px] items-center justify-center rounded-sm border border-[#6d8096] bg-linear-to-b from-[#c6d8e9] to-[#9db9d4]"><Icon size={12}><path d="M8 2H18V12H8ZM2 8H12V18H2Z" fill="#ddd" stroke="#555" strokeWidth="2" /></Icon></button>
          <button type="button" aria-label="Close view" className="flex h-[17px] w-[29px] items-center justify-center rounded-sm border border-[#7b2a1a] bg-linear-to-b from-[#de8a70] to-[#bb3c1c]"><Icon size={12}><path d="M3 4L17 16M17 4L3 16" stroke="#fff" strokeWidth="4" /></Icon></button>
        </div>
      </div>
      <div className="flex h-[22px] shrink-0 items-center gap-[5px] bg-[#ebefec] pl-[3px]">
        {viewTools.map(t => (
          <React.Fragment key={t.name}>
            {t.sep && <span className="h-[19px] w-px bg-[#a3a7a3]" />}
            <button type="button" aria-label={t.name} className="relative flex items-center gap-[3px]">
              <Icon size={16}>{t.art}</Icon>
              {t.drop && <Caret className="mr-px ml-[2px]" />}
              {t.more && <svg width="5" height="3" className="absolute right-0 -bottom-[2px]"><path d="M0 0H5L2.500 3Z" fill="#111" /></svg>}
            </button>
          </React.Fragment>
        ))}
      </div>
      <Canvas />
    </main>
  );
}

function KeyBar() {
  const [view, setView] = useState(1);
  return (
    <div className="flex h-[33px] shrink-0 items-stretch border-b-2 border-[#bfc3c0] pt-px">
      <div className="flex items-center bg-linear-to-b from-[#f8faf8] to-[#d9dcd9] pl-[2px]">
        <Grip />
        <button type="button" aria-label="Back" className="ml-[7px] flex items-center gap-[8px]"><Icon size={18}><circle cx="10" cy="10" r="10" fill="#1f9b28" /><path d="M16 10H5M9.5 5L4.5 10L9.5 15" stroke="#fff" strokeWidth="2.2" /></Icon><Caret /></button>
        <button type="button" aria-label="Forward" className="ml-[7px] flex items-center gap-[8px]"><Icon size={18}><circle cx="10" cy="10" r="10" fill="#a4a8a5" /><path d="M4 10H15M10.5 5L15.5 10L10.5 15" stroke="#e8e8e8" strokeWidth="2.2" /></Icon><Caret dim /></button>
        <button type="button" aria-label="Saved view" className="mr-[5px] ml-[7px] flex items-center gap-[8px]"><Icon><ellipse cx="11" cy="15" rx="8" ry="3.500" fill="#dce1f5" stroke="#9a9fc0" /><path d="M4 0L13 14L8 15Z" fill="#fff" stroke="#555" /><ellipse cx="13" cy="14" rx="4" ry="2" stroke="#8791bb" /></Icon><Caret /></button>
        <span className="relative flex items-center">
          <Icon size={15} className="absolute left-[2px]"><Windows3 /></Icon>
          <select aria-label="View group" className="h-[19px] w-[120px] appearance-none border border-[#a6aaa6] bg-[#dde0dc] pl-[21px] text-[#222]"><option>Default Temp View</option></select>
          <Caret className="pointer-events-none absolute right-[5px]" />
        </span>
        <span className="ml-1 flex h-7 items-center border-x border-[#a3a7a3] px-[5px]"><Icon><Windows3 /></Icon></span>
        <div className="mr-[5px] ml-[3px] flex">
          {[1, 2, 3, 4, 5, 6, 7, 8].map(n => (
            <button key={n} type="button" onClick={() => setView(n)} className={`h-[18px] w-[13px] border-r-2 border-b border-[#444] text-[11px] leading-4 text-[#222] ${view === n ? 'bg-[#f7c98c] font-bold' : 'bg-[#d9dcda]'}`}>{n}</button>
          ))}
        </div>
      </div>
      <div className="ml-1 flex items-center bg-linear-to-b from-[#f8faf8] to-[#d9dcd9] pr-[15px]">
        <Grip />
        <label className="flex items-center gap-[5px] pr-[7px] pl-[12px]"><b className="w-[11px] font-['Liberation_Sans',sans-serif] text-[15px] text-black">X</b><input readOnly defaultValue="100761:5.347052" className="h-[16px] w-[129px] border border-[#a6aaa6] bg-[#f7f9f7] pl-1 text-[11px] text-[#777]" /></label>
        <Sep />
        <label className="flex items-center gap-[5px] pl-[9px]"><b className="w-[11px] font-['Liberation_Sans',sans-serif] text-[15px] text-black">Y</b><input readOnly defaultValue="100382:0.814996" className="h-[16px] w-[129px] border border-[#a6aaa6] bg-[#f7f9f7] pl-1 text-[11px] text-[#777]" /></label>
      </div>
    </div>
  );
}

function StatusBar() {
  const cell = 'flex h-full shrink-0 items-center border-l border-[#a3a7a3] whitespace-nowrap overflow-hidden';
  return (
    <footer className="flex h-[23px] shrink-0 items-center text-[#222]">
      <p className="w-[371px] shrink-0 pl-[3px]">Nothing to drop</p>
      <Grip />
      <div className={`${cell} ml-[3px] w-[206px] pl-[17px]`}>
        <svg width="6" height="4" className="self-start"><path d="M0 4L3 0L6 4Z" fill="#111" /></svg>
        <span className="pl-[3px]">Line, Level: Default, Groups= GG{'{10}'}</span>
      </div>
      <div className={`${cell} w-[27px] justify-center`}><Icon size={14}><path d="M4 15Q12 17 14 12V4" stroke={BLUE} /><Dot x={3} y={14} /><Dot x={14} y={12} /><Dot x={15} y={4} /></Icon></div>
      <div className={`${cell} w-[26px] justify-center`}><Icon size={14}><path d="M6 9V6Q6 2 10 2T14 6V9" stroke="#555" strokeWidth="2" /><rect x="3" y="9" width="14" height="9" rx="2" fill="#a9a044" stroke="#5d5720" /></Icon></div>
      <div className={`${cell} w-[109px] pl-[2px]`}>Default</div>
      <div className={`${cell} min-w-0 grow`} />
      <div className={`${cell} w-[98px] gap-[10px] pl-[5px]`}><Icon size={13}><SmartLine /></Icon>Drawing (1)</div>
      <div className={`${cell} w-[158px] pl-[2px]`}>100785:9.388304, 100369:5.9303</div>
      <div className={`${cell} w-[26px]`} />
      <div className={`${cell} w-[27px]`} />
      <div className={`${cell} w-[27px]`} />
      <div className={`${cell} w-[26px] justify-center`}><Icon size={14}><path d="M3 3H15L13 8L16 17H4L7 11Z" fill="#eee" stroke="#999" strokeWidth="2" /></Icon></div>
      <div className={`${cell} w-[26px] justify-center`}><Icon size={15}><path d="M4 10V18H16V10" fill="#f5f0dc" stroke="#b8862c" /><path d="M1 11L10 2L19 11H15L10 6L5 11Z" fill="#f29a1f" stroke="#c06f0c" /><rect x="9" y="12" width="4" height="6" fill="#46b" /></Icon></div>
      <div className={`${cell} w-[26px]`} />
      <div className={`${cell} w-[21px] justify-center`}><Icon size={13}><path d="M2 2H18L16 18H4ZM6 6H14V13H6Z" stroke="#999" strokeWidth="2" /></Icon></div>
    </footer>
  );
}

const apps = [
  { name: 'File Explorer', art: <><path d="M1 3H8L10 5H19V17H1Z" fill="#e8ac35" /><path d="M1 6H19V17H1Z" fill="#fbd768" /><path d="M5 17V11H15V17H12V14H8V17Z" fill="#3f94d6" /></> },
  { name: 'Microsoft Store', art: <><path d="M6 6V2H14V6" stroke="#fff" strokeWidth="1.5" /><path d="M1 5H19V19H1Z" fill="#fff" /><path d="M6 8H9.5V11.5H6Z" fill="#e94f26" /><path d="M10.5 8H14V11.5H10.5Z" fill="#7cb82f" /><path d="M6 12.5H9.5V16H6Z" fill="#35a6de" /><path d="M10.5 12.5H14V16H10.5Z" fill="#f7b718" /></> },
  { name: 'Mail', art: <><path d="M0 8L10 1L20 8V18H0Z" fill="#1265b5" /><path d="M2 7H18V13L10 15Z" fill="#fff" /><path d="M0 8L10 13.5L20 8V18H0Z" fill="#34a3ea" /><path d="M20 8V18L8 12.5Z" fill="#70c4f6" /></> },
  { name: 'Primavera P6', art: <><rect width="20" height="20" fill="#ec1c24" /><text x="2" y="15" fontSize="14" fill="#fff" stroke="#fff" strokeWidth=".4" fontFamily='"Liberation Sans", sans-serif'>P6</text></> },
  { name: 'Chrome', open: true, art: <><circle cx="10" cy="10" r="9" fill="#f9c51b" /><path d="M2.2 5.5A9 9 0 0 1 17.8 5.5H10L6 12.3Z" fill="#e3402f" /><path d="M2.2 5.5A9 9 0 0 0 9.5 19L13.9 12.2L10 14.5L6.1 12.2Z" fill="#2fa24e" /><circle cx="10" cy="10" r="4.5" fill="#fff" /><circle cx="10" cy="10" r="3.5" fill="#3d7ff0" /></> },
  { name: 'MicroStation', open: true, active: true, art: <Logo /> },
  { name: 'Edge', open: true, art: <><path d="M1 10A9 9 0 0 1 19 9Q19 13 14 13Q11 12 12 10Q12 7 8 7Q3 7 1 12Z" fill="#36c6a8" /><path d="M1 9Q3 1 11 1Q5 3 4 9Z" fill="#2ba8df" /><path d="M1 10Q3 7 8 7Q12 7 12 10Q10 8 8 11Q8 16 13 16Q16 16 17.5 15Q15 19 10 19Q1 18 1 10Z" fill="#1679d0" /></> },
  { name: 'Recorder', open: true, art: <><circle cx="10" cy="10" r="8.5" fill="#111" stroke="#eee" strokeWidth="1.5" /><circle cx="10" cy="10" r="5" fill="#f03a24" /></> },
];

function Taskbar() {
  return (
    <div className="flex h-[37px] shrink-0 bg-linear-to-r from-[#1d3640] via-[#1d3341] to-[#152543] text-white">
      <button type="button" aria-label="Start" className="flex w-[45px] items-center justify-center"><Icon size={16}><path d="M0 3L8.5 2V9.5H0ZM9.5 1.9L20 0V9.5H9.5ZM0 10.5H8.5V18L0 17ZM9.5 10.5H20V20L9.5 18Z" fill="#fff" /></Icon></button>
      <label className="flex w-[324px] items-center gap-[11px] bg-[#ecf0ec] pl-[11px]">
        <Icon size={16}><circle cx="12" cy="8" r="6.5" stroke="#222" strokeWidth="1.6" /><path d="M7.5 13L1 19" stroke="#222" strokeWidth="1.6" /></Icon>
        <input aria-label="Search" placeholder="Type here to search" className="w-[240px] bg-transparent font-['Open_Sans',sans-serif] text-[13px] outline-none placeholder:text-[#4a4a4a]" />
      </label>
      <div className="flex pl-[2px]">
        {apps.map(a => (
          <button key={a.name} type="button" aria-label={a.name} className={`relative flex w-[46px] items-center justify-center ${a.active ? 'bg-[#45606b]' : ''}`}>
            <Icon size={22}>{a.art}</Icon>
            {a.open && <span className="absolute inset-x-[4px] bottom-0 h-[2px] bg-[#76b4e4]" />}
          </button>
        ))}
      </div>
      <div className="ml-auto flex items-center pr-[9px] font-['Open_Sans',sans-serif] text-[11px] leading-4">
        <Icon size={12}><path d="M2 14L10 6L18 14" stroke="#eee" strokeWidth="2" /></Icon>
        <Icon size={18} className="ml-[7px]"><circle cx="10" cy="10" r="7.5" fill="#111" stroke="#eee" strokeWidth="1.5" /><circle cx="10" cy="10" r="5" fill="#e23a26" /></Icon>
        <Icon size={14} className="ml-[9px]"><path d="M1 17Q2 4 18 3M5 18Q6 9 18 8M9 18Q10 13 18 12" stroke="#dde" strokeWidth="1.6" /><circle cx="16" cy="17" r="2" fill="#fff" /></Icon>
        <div className="ml-[6px] w-[26px] text-center"><p>ENG</p><p>US</p></div>
        <div className="ml-[9px] w-[52px] text-center whitespace-nowrap"><p>4:02 PM</p><p>4/15/2021</p></div>
        <span className="relative ml-[12px] flex h-[28px] w-[27px] items-start pt-[2px]">
          <Icon size={20}><path d="M2 4H18V15H11L7 19V15H2Z" fill="#fff" /><path d="M4 7H15M4 10H12" stroke="#2a3b50" strokeWidth="1.5" /></Icon>
          <span className="absolute right-[4px] bottom-0 h-[15px] w-[15px] rounded-full border border-[#889] bg-[#2c3438] text-center text-[10px] leading-[13px]">1</span>
        </span>
      </div>
    </div>
  );
}

export default function App() {
  return (
    <div className="relative flex h-screen min-h-[720px] flex-col overflow-hidden bg-[#ebefeb] font-['Roboto',sans-serif] text-[10px]">
      <TitleBar />
      <MenuBar />
      <MainToolbar />
      <div className="flex min-h-0 grow">
        <TasksPanel />
        <ViewWindow />
      </div>
      <KeyBar />
      <StatusBar />
      <Taskbar />

      <div className="absolute top-0 left-1/2 flex h-[42px] w-[468px] -translate-x-1/2 justify-center rounded-b-md bg-[#e91e61] font-['Lato',sans-serif] text-[23px] leading-[34px] font-bold whitespace-nowrap text-white">
        How to Group &amp;Ungroup in Microstation ?
      </div>
      <div className="absolute top-[30px] right-[71px] flex h-[31px] w-[158px] items-center rounded-full bg-white pl-[19px]">
        <Icon size={16}><path d="M1 9H5V18H1ZM7 18V9L11 5V1Q15 1 14 7H19V10L17 18Z" fill="#2f7bed" /></Icon>
        <span className="ml-[13px] text-[11px] font-medium text-[#666]">SUBSCRIBED</span>
        <span className="ml-[7px]">
          <Icon><path d="M7 12Q9 10 9 6Q9 1 12.500 1T16 6Q16 10 18 12ZM11 14h3" stroke="#222" fill="#fff" /><path d="M5 18L1 13Q0 10.500 3 11.500L2 7Q3 5 5 7L6 10Q11 8 12 12V15L10.500 18Z" fill="#fff" stroke="#111" /><path d="M6.500 12v2M8.500 12v2" stroke="#111" strokeWidth="1" /></Icon>
        </span>
      </div>
    </div>
  );
}
